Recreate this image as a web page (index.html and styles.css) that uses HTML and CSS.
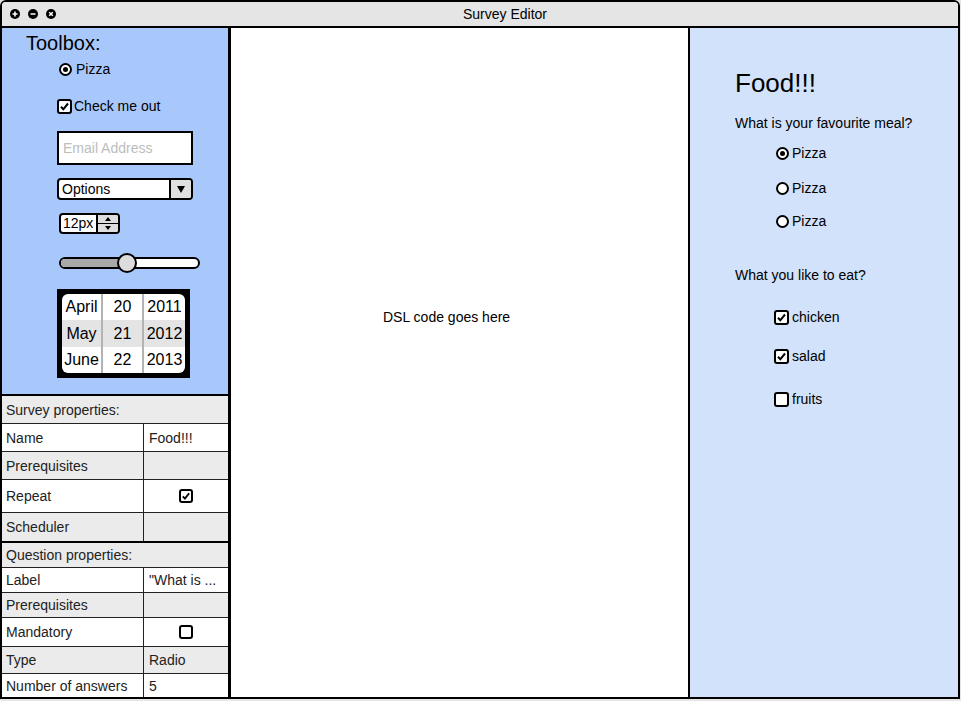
FILE: index.html
```html
<!DOCTYPE html>
<html>
<head>
<meta charset="utf-8">
<link rel="stylesheet" href="styles.css">
</head>
<body>
<div class="window">
  <div class="titlebar">
    <div class="tbtns">
      <svg class="tbtn" viewBox="0 0 10 10" width="10" height="10"><circle cx="5" cy="5" r="5" fill="#000"/><path d="M5 2.5V7.5M2.5 5H7.5" stroke="#fff" stroke-width="1.6"/></svg>
      <svg class="tbtn" viewBox="0 0 10 10" width="10" height="10"><circle cx="5" cy="5" r="5" fill="#000"/><path d="M2.5 5H7.5" stroke="#fff" stroke-width="1.6"/></svg>
      <svg class="tbtn" viewBox="0 0 10 10" width="10" height="10"><circle cx="5" cy="5" r="5" fill="#000"/><path d="M3.2 3.2L6.8 6.8M6.8 3.2L3.2 6.8" stroke="#fff" stroke-width="1.5"/></svg>
    </div>
    <div class="title">Survey Editor</div>
  </div>
  <div class="body">
    <div class="left">
      <div class="toolbox">
        <div class="tb-title">Toolbox:</div>
        <div class="tb-radio opt"><span class="radio checked"></span><span>Pizza</span></div>
        <div class="tb-check opt"><span class="check"><svg viewBox="0 0 11 11" width="11" height="11"><path d="M2 5.8L4.3 8.3L9 2.5" fill="none" stroke="#000" stroke-width="2"/></svg></span><span>Check me out</span></div>
        <div class="tb-email">Email Address</div>
        <div class="tb-select"><span class="sel-text">Options</span><span class="sel-btn"><span class="tri-down"></span></span></div>
        <div class="tb-spin"><span class="spin-text">12px</span><span class="spin-btns"><span class="spin-up"><span class="tri-up-s"></span></span><span class="spin-down"><span class="tri-down-s"></span></span></span></div>
        <div class="tb-slider">
          <div class="track"><div class="track-fill"></div></div>
          <div class="thumb"></div>
        </div>
        <div class="tb-date">
          <div class="date-grid">
            <div class="drow"><span class="dc c1">April</span><span class="dc c2">20</span><span class="dc c3">2011</span></div>
            <div class="drow sel"><span class="dc c1">May</span><span class="dc c2">21</span><span class="dc c3">2012</span></div>
            <div class="drow"><span class="dc c1">June</span><span class="dc c2">22</span><span class="dc c3">2013</span></div>
          </div>
        </div>
      </div>
      <div class="props">
        <div class="prow gray h27"><span class="cell full">Survey properties:</span></div>
        <div class="prow h27"><span class="cell k">Name</span><span class="cell v">Food!!!</span></div>
        <div class="prow gray h27"><span class="cell k">Prerequisites</span><span class="cell v"></span></div>
        <div class="prow h32"><span class="cell k">Repeat</span><span class="cell v center"><span class="check small"><svg viewBox="0 0 11 11" width="10" height="10"><path d="M2 5.8L4.3 8.3L9 2.5" fill="none" stroke="#000" stroke-width="2"/></svg></span></span></div>
        <div class="prow gray h28 thick"><span class="cell k">Scheduler</span><span class="cell v"></span></div>
        <div class="prow gray h24"><span class="cell full">Question properties:</span></div>
        <div class="prow h24"><span class="cell k">Label</span><span class="cell v">"What is ...</span></div>
        <div class="prow gray h24"><span class="cell k">Prerequisites</span><span class="cell v"></span></div>
        <div class="prow h28"><span class="cell k">Mandatory</span><span class="cell v center"><span class="check small"></span></span></div>
        <div class="prow gray h26"><span class="cell k">Type</span><span class="cell v">Radio</span></div>
        <div class="prow h23 last"><span class="cell k">Number of answers</span><span class="cell v">5</span></div>
      </div>
    </div>
    <div class="middle">DSL code goes here</div>
    <div class="right">
      <div class="food">Food!!!</div>
      <div class="q q1">What is your favourite meal?</div>
      <div class="ans r1"><span class="radio checked"></span><span>Pizza</span></div>
      <div class="ans r2"><span class="radio"></span><span>Pizza</span></div>
      <div class="ans r3"><span class="radio"></span><span>Pizza</span></div>
      <div class="q q2">What you like to eat?</div>
      <div class="ans cb c1m"><span class="check"><svg viewBox="0 0 11 11" width="11" height="11"><path d="M2 5.8L4.3 8.3L9 2.5" fill="none" stroke="#000" stroke-width="2"/></svg></span><span>chicken</span></div>
      <div class="ans cb c2m"><span class="check"><svg viewBox="0 0 11 11" width="11" height="11"><path d="M2 5.8L4.3 8.3L9 2.5" fill="none" stroke="#000" stroke-width="2"/></svg></span><span>salad</span></div>
      <div class="ans cb c3m"><span class="check"></span><span>fruits</span></div>
    </div>
  </div>
</div>
</body>
</html>
```
FILE: styles.css
```css
html, body {
  margin: 0;
  padding: 0;
}
body {
  background: #e6e6e6;
  font-family: "Liberation Sans", Arial, sans-serif;
  color: #000;
  width: 961px;
  height: 701px;
  overflow: hidden;
}
.window {
  width: 960px;
  height: 699px;
  box-sizing: border-box;
  border: 2px solid #000;
  border-radius: 6px 6px 0 0;
  background: #fff;
  display: flex;
  flex-direction: column;
  overflow: hidden;
}
.titlebar {
  height: 26px;
  box-sizing: border-box;
  border-bottom: 2px solid #000;
  background: #e5e5e5;
  display: flex;
  align-items: center;
  flex: none;
}
.tbtns {
  display: flex;
  gap: 8px;
  margin-left: 8px;
}
.tbtn {
  display: block;
}
.title {
  margin-left: 407px;
  font-size: 14px;
  line-height: 16px;
}
.body {
  display: flex;
  flex: 1;
  min-height: 0;
}
.left {
  width: 229px;
  flex: none;
  box-sizing: border-box;
  border-right: 3px solid #000;
  display: flex;
  flex-direction: column;
}
.toolbox {
  height: 368px;
  flex: none;
  box-sizing: border-box;
  border-bottom: 2px solid #000;
  background: #a8c8fc;
  padding-top: 3px;
  font-size: 14px;
}
.tb-title {
  font-size: 20px;
  line-height: 24px;
  margin-left: 24px;
}
.opt {
  display: flex;
  align-items: center;
  height: 16px;
  line-height: 16px;
}
.tb-radio {
  margin: 6px 0 0 57px;
  gap: 4px;
}
.tb-check {
  margin: 21px 0 0 55px;
  gap: 2px;
}
.radio {
  width: 13px;
  height: 13px;
  box-sizing: border-box;
  border: 2px solid #000;
  border-radius: 50%;
  background: #fff;
  display: flex;
  align-items: center;
  justify-content: center;
  flex: none;
}
.radio.checked::after {
  content: "";
  width: 5px;
  height: 5px;
  border-radius: 50%;
  background: #000;
}
.check {
  width: 15px;
  height: 15px;
  box-sizing: border-box;
  border: 2px solid #000;
  border-radius: 3px;
  background: #fff;
  display: flex;
  align-items: center;
  justify-content: center;
  flex: none;
}
.check svg {
  display: block;
}
.check.small {
  width: 14px;
  height: 14px;
}
.tb-email {
  margin: 17px 0 0 55px;
  width: 136px;
  height: 34px;
  box-sizing: border-box;
  border: 2px solid #000;
  background: #fff;
  color: #bdbdbd;
  padding-left: 4px;
  display: flex;
  align-items: center;
}
.tb-select {
  margin: 13px 0 0 55px;
  width: 136px;
  height: 22px;
  box-sizing: border-box;
  border: 2px solid #000;
  border-radius: 4px;
  background: #fff;
  display: flex;
  overflow: hidden;
}
.sel-text {
  flex: 1;
  padding-left: 3px;
  line-height: 18px;
}
.sel-btn {
  width: 22px;
  box-sizing: border-box;
  border-left: 2px solid #000;
  background: #e0e0e0;
  display: flex;
  align-items: center;
  justify-content: center;
}
.tri-down {
  width: 0;
  height: 0;
  border-left: 4px solid transparent;
  border-right: 4px solid transparent;
  border-top: 7px solid #000;
}
.tb-spin {
  margin: 13px 0 0 57px;
  width: 61px;
  height: 21px;
  box-sizing: border-box;
  border: 2px solid #000;
  border-radius: 4px;
  background: #fff;
  display: flex;
  overflow: hidden;
}
.spin-text {
  flex: 1;
  padding-left: 2px;
  line-height: 17px;
}
.spin-btns {
  width: 22px;
  box-sizing: border-box;
  border-left: 2px solid #000;
  background: #dedede;
  display: flex;
  flex-direction: column;
}
.spin-up, .spin-down {
  flex: 1;
  display: flex;
  align-items: center;
  justify-content: center;
}
.spin-up {
  border-bottom: 1px solid #000;
}
.tri-up-s {
  width: 0;
  height: 0;
  border-left: 3px solid transparent;
  border-right: 3px solid transparent;
  border-bottom: 4px solid #000;
}
.tri-down-s {
  width: 0;
  height: 0;
  border-left: 3px solid transparent;
  border-right: 3px solid transparent;
  border-top: 4px solid #000;
}
.tb-slider {
  margin: 19px 0 0 57px;
  width: 141px;
  height: 19px;
  position: relative;
  display: flex;
  align-items: center;
}
.track {
  width: 141px;
  height: 12px;
  box-sizing: border-box;
  border: 2px solid #000;
  border-radius: 6px;
  background: #fff;
  overflow: hidden;
}
.track-fill {
  width: 66px;
  height: 100%;
  background: #a9a9a9;
}
.thumb {
  position: absolute;
  left: 58px;
  top: 0;
  width: 20px;
  height: 20px;
  box-sizing: border-box;
  border: 2px solid #000;
  border-radius: 50%;
  background: #dcdcdc;
}
.tb-date {
  margin: 17px 0 0 55px;
  width: 133px;
  height: 89px;
  box-sizing: border-box;
  background: #000;
  padding: 5px;
}
.date-grid {
  background: #fff;
  border-radius: 6px;
  overflow: hidden;
  height: 79px;
  display: flex;
  flex-direction: column;
  font-size: 16px;
}
.drow {
  display: flex;
  height: 26px;
}
.drow.sel {
  height: 27px;
  background: #e4e4e4;
}
.dc {
  display: flex;
  align-items: center;
  justify-content: center;
}
.dc.c1 {
  width: 39px;
  border-right: 2px solid #b3b3b3;
}
.dc.c2 {
  width: 39px;
  border-right: 2px solid #b3b3b3;
}
.dc.c3 {
  flex: 1;
}
.props {
  flex: 1;
  background: #fff;
  font-size: 14px;
  color: #222;
}
.prow {
  display: flex;
  border-bottom: 1px solid #222;
}
.prow.thick {
  border-bottom: 2px solid #000;
}
.prow.last {
  border-bottom: none;
}
.prow.gray {
  background: #ebebeb;
}
.h23 { height: 23px; }
.h24 { height: 24px; }
.h26 { height: 26px; }
.h27 { height: 27px; }
.h28 { height: 28px; }
.h32 { height: 32px; }
.cell {
  display: flex;
  align-items: center;
}
.cell.full {
  flex: 1;
  padding-left: 4px;
}
.cell.k {
  width: 142px;
  box-sizing: border-box;
  border-right: 1px solid #222;
  padding-left: 4px;
}
.cell.v {
  flex: 1;
  padding-left: 5px;
}
.cell.v.center {
  padding-left: 0;
  justify-content: center;
}
.middle {
  width: 459px;
  flex: none;
  box-sizing: border-box;
  border-right: 2px solid #000;
  background: #fff;
  padding: 281px 0 0 152px;
  font-size: 14px;
  line-height: 16px;
}
.right {
  flex: 1;
  background: #d2e2fa;
  padding: 40px 0 0 45px;
  font-size: 14px;
  line-height: 16px;
}
.food {
  font-size: 26px;
  line-height: 30px;
}
.q1 { margin-top: 17px; }
.q2 { margin-top: 38px; }
.ans {
  display: flex;
  align-items: center;
  height: 16px;
  gap: 3px;
  margin-left: 41px;
}
.ans.cb {
  margin-left: 39px;
}
.r1 { margin-top: 14px; }
.r2 { margin-top: 19px; }
.r3 { margin-top: 17px; }
.c1m { margin-top: 26px; }
.c2m { margin-top: 23px; }
.c3m { margin-top: 27px; }
```
